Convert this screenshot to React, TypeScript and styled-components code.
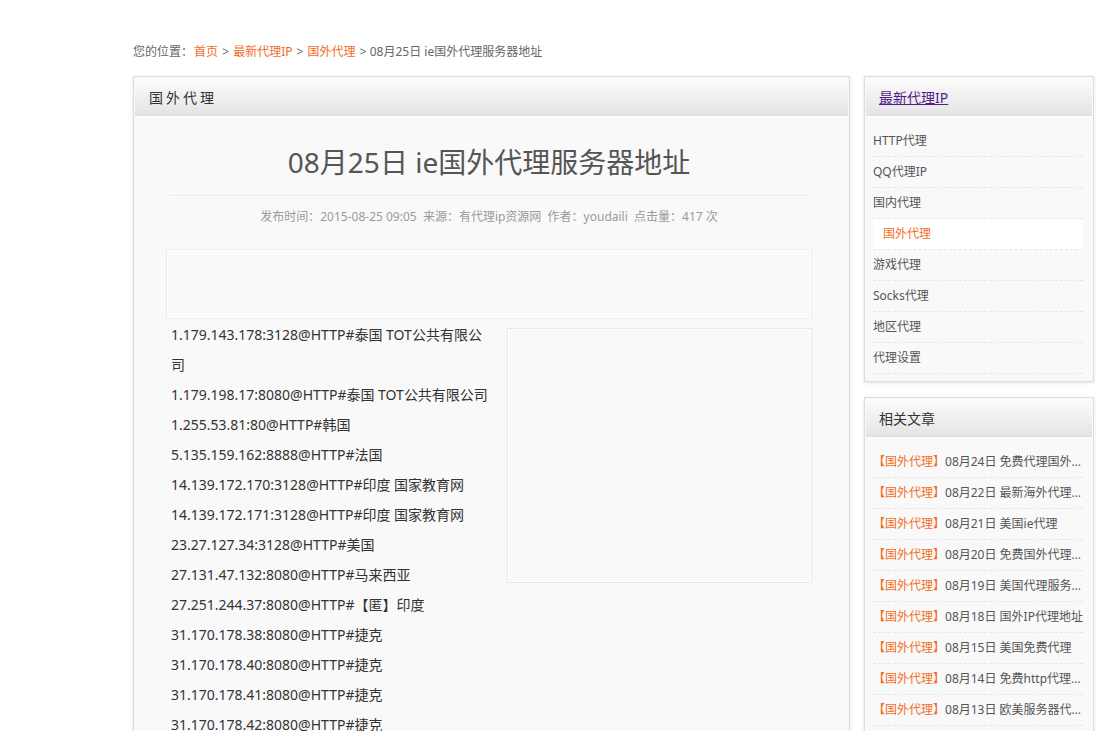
import React from 'react';
import styled, { createGlobalStyle } from 'styled-components';

const GlobalStyle = createGlobalStyle`
    body {
        margin: 0;
        background: #fff;
        font-family: "Noto Sans", "Noto Sans CJK SC", sans-serif;
        font-size: 12px;
        color: #666;
    }
    a {
        text-decoration: none;
    }
`;

const ipList: string[] = [
    '1.179.143.178:3128@HTTP#泰国 TOT公共有限公司',
    '1.179.198.17:8080@HTTP#泰国 TOT公共有限公司',
    '1.255.53.81:80@HTTP#韩国',
    '5.135.159.162:8888@HTTP#法国',
    '14.139.172.170:3128@HTTP#印度 国家教育网',
    '14.139.172.171:3128@HTTP#印度 国家教育网',
    '23.27.127.34:3128@HTTP#美国',
    '27.131.47.132:8080@HTTP#马来西亚',
    '27.251.244.37:8080@HTTP#【匿】印度',
    '31.170.178.38:8080@HTTP#捷克',
    '31.170.178.40:8080@HTTP#捷克',
    '31.170.178.41:8080@HTTP#捷克',
    '31.170.178.42:8080@HTTP#捷克',
];

const navItems: string[] = ['HTTP代理', 'QQ代理IP', '国内代理', '国外代理', '游戏代理', 'Socks代理', '地区代理', '代理设置'];

const related: string[] = [
    '08月24日 免费代理国外代理IP地址',
    '08月22日 最新海外代理服务器',
    '08月21日 美国ie代理',
    '08月20日 免费国外代理服务器',
    '08月19日 美国代理服务器地址',
    '08月18日 国外IP代理地址',
    '08月15日 美国免费代理',
    '08月14日 免费http代理服务器',
    '08月13日 欧美服务器代理IP',
];

const App: any = () => {
    return (
        <>
            <GlobalStyle />
            <Page>
                <Breadcrumb>
                    您的位置：<a href="#">首页</a> &gt; <a href="#">最新代理IP</a> &gt; <a href="#">国外代理</a> &gt; 08月25日 ie国外代理服务器地址
                </Breadcrumb>
                <Columns>
                    <MainBox>
                        <BoxHeader $indent={14}>
                            <span className="spaced">国外代理</span>
                        </BoxHeader>
                        <Article>
                            <h1>08月25日 ie国外代理服务器地址</h1>
                            <Meta>
                                发布时间：2015-08-25 09:05&nbsp;&nbsp;来源：有代理ip资源网&nbsp;&nbsp;作者：youdaili&nbsp;&nbsp;点击量：417 次
                            </Meta>
                            <AdBanner />
                            <Body>
                                <AdSquare />
                                {ipList.map((line) => (
                                    <p key={line}>{line}</p>
                                ))}
                            </Body>
                        </Article>
                    </MainBox>
                    <Sidebar>
                        <SideBox>
                            <BoxHeader $indent={13}>
                                <a className="visited" href="#">最新代理IP</a>
                            </BoxHeader>
                            <NavList>
                                {navItems.map((item) => (
                                    <NavItem key={item} $active={item === '国外代理'}>
                                        <a href="#">{item}</a>
                                    </NavItem>
                                ))}
                            </NavList>
                        </SideBox>
                        <SideBox>
                            <BoxHeader $indent={13}>
                                <span>相关文章</span>
                            </BoxHeader>
                            <NavList>
                                {related.map((item) => (
                                    <RelatedItem key={item}>
                                        <span className="line">
                                            <span className="tag">【国外代理】</span>
                                            <a href="#">{item}</a>
                                        </span>
                                    </RelatedItem>
                                ))}
                            </NavList>
                        </SideBox>
                    </Sidebar>
                </Columns>
            </Page>
        </>
    );
}

export default App;

const Page = styled.div`
    width: 962px;
    margin-left: 133px;
    padding-top: 42px;
`

const Breadcrumb = styled.div`
    line-height: 20px;
    height: 20px;
    color: #666;
    font-size: 12px;

    a {
        color: #f26c1d;
        margin: 0 1px;
    }
`

const Columns = styled.div`
    display: flex;
    align-items: flex-start;
    gap: 14px;
    margin-top: 14px;
`

const Panel = styled.div`
    background: #f9f9f9;
    border: 1px solid #ddd;
    box-shadow: 0 1px 3px rgba(0, 0, 0, 0.12);
`

const MainBox = styled(Panel)`
    width: 715px;
    min-height: 700px;
`

const BoxHeader = styled.div<{ $indent: number }>`
    height: 37px;
    margin: 1px 1px 0;
    display: flex;
    align-items: center;
    padding-left: ${(p) => p.$indent}px;
    background: linear-gradient(to bottom, #fcfcfc 0%, #e4e4e4 100%);
    border-bottom: 1px solid #dcdcdc;
    box-shadow: 0 1px 0 #fff;
    font-size: 14px;
    color: #333;

    .spaced {
        letter-spacing: 3px;
    }

    a.visited {
        color: #551a8b;
        text-decoration: underline;
    }
`

const Article = styled.div`
    padding: 0 37px 0 32px;

    h1 {
        margin: 0 4px;
        padding: 24px 0 11px;
        text-align: center;
        font-size: 28px;
        font-weight: normal;
        line-height: 44px;
        color: #555;
        border-bottom: 1px solid #ebebeb;
        box-shadow: 0 1px 0 #fff;
    }
`

const Meta = styled.div`
    text-align: center;
    color: #999;
    font-size: 12px;
    line-height: 20px;
    padding: 11px 0 22px;
`

const AdBanner = styled.div`
    height: 68px;
    border: 1px solid #ececec;
    box-shadow: inset 0 0 0 1px #fff;
`

const Body = styled.div`
    padding: 1px 0 0 5px;

    p {
        margin: 0;
        line-height: 30px;
        font-size: 14px;
        color: #333;
    }
`

const AdSquare = styled.div`
    float: right;
    width: 303px;
    height: 253px;
    margin: 8px 0 0 12px;
    border: 1px solid #e8e8e8;
    box-shadow: inset 0 0 0 1px #fff;
`

const Sidebar = styled.div`
    width: 230px;
    min-width: 0;
    display: flex;
    flex-direction: column;
    gap: 15px;
`

const SideBox = styled(Panel)`
    padding-bottom: 7px;
    overflow: hidden;
`

const NavList = styled.ul`
    list-style: none;
    margin: 0;
    padding: 10px 10px 0 8px;
`

const NavItem = styled.li<{ $active?: boolean }>`
    height: 30px;
    line-height: 30px;
    border-bottom: 1px dashed #e6e6e6;
    font-size: 12px;
    padding-left: ${(p) => (p.$active ? '10px' : '0')};
    background: ${(p) => (p.$active ? '#fff' : 'transparent')};

    a {
        color: ${(p) => (p.$active ? '#f26c1d' : '#555')};
    }
`

const RelatedItem = styled.li`
    height: 30px;
    line-height: 30px;
    border-bottom: 1px dashed #e6e6e6;
    font-size: 12px;

    .line {
        display: block;
        width: 210px;
        white-space: nowrap;
        overflow: hidden;
        text-overflow: ellipsis;
    }

    .tag {
        color: #f26c1d;
    }

    a {
        color: #555;
    }
`
